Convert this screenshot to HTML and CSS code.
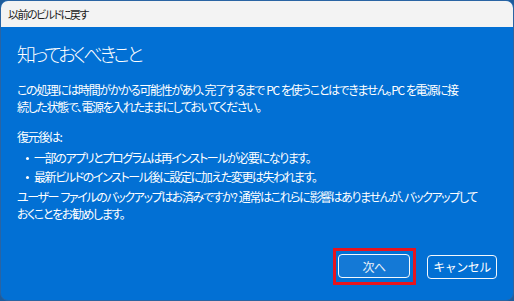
FILE: index.html
```html
<!DOCTYPE html>
<html>

    <head>
        <title>以前のビルドに戻す</title>
        <link rel="stylesheet" href="styles.css">
    </head>

    <body>
        <div class="window">
            <div class="titlebar">以前のビルドに戻す</div>

            <div class="content">
                <h1>知っておくべきこと</h1>
                <p>この処理には時間がかかる可能性があり、完了するまで PC を使うことはできません。PC を電源に接<br>続した状態で、電源を入れたままにしておいてください。</p>
                <p class="label">復元後は:</p>
                <ul>
                    <li>一部のアプリとプログラムは再インストールが必要になります。</li>
                    <li>最新ビルドのインストール後に設定に加えた変更は失われます。</li>
                </ul>
                <p>ユーザー ファイルのバックアップはお済みですか? 通常はこれらに影響はありませんが、バックアップして<br>おくことをお勧めします。</p>
            </div>

            <div class="footer">
                <span class="highlight">
                    <button class="btn primary">次へ</button>
                </span>
                <button class="btn cancel">キャンセル</button>
            </div>
        </div>
    </body>

</html>
```

FILE: styles.css
```css
html {
    background: #1d5c9c;
}

body {
    margin: 0;
    font-family: "Noto Sans CJK JP", sans-serif;
    font-feature-settings: "palt";
}

.window {
    height: 301px;
    box-sizing: border-box;
    display: flex;
    flex-direction: column;
    background: #0270d4;
    border: 1px solid #2a64a3;
    border-radius: 8px;
    overflow: hidden;
    color: #fff;
}

.titlebar {
    height: 24px;
    padding: 2px 0 0 7px;
    line-height: 22px;
    font-size: 11px;
    letter-spacing: -1.5px;
    background: #f3f3f3;
    color: #1b1b1b;
}

.content {
    padding: 13px 16px 0 16px;
    font-size: 12px;
    line-height: 17px;
    letter-spacing: -1.4px;
    word-spacing: 1px;
    white-space: nowrap;
}

h1 {
    margin: 0 0 13px 0;
    font-size: 19px;
    font-weight: 300;
    line-height: 28px;
    letter-spacing: -3px;
}

p {
    margin: 0 0 13px 0;
}

.label {
    margin-bottom: 4px;
}

ul {
    list-style: none;
    margin: 0 0 3px 0;
    padding: 0;
}

li {
    display: flex;
    align-items: flex-start;
    margin-bottom: 2px;
}

li::before {
    content: "";
    flex: none;
    width: 3px;
    height: 3px;
    margin: 8px 5px 0 9px;
    border-radius: 50%;
    background: #fff;
}

.footer {
    margin-top: auto;
    display: flex;
    align-items: center;
    justify-content: flex-end;
    gap: 11px;
    padding: 0 16px 15px 0;
}

.highlight {
    display: flex;
    padding: 3px 3px 4px 2px;
    border: 3px solid #e8141e;
}

.btn {
    height: 24px;
    padding: 0;
    font-family: inherit;
    font-size: 12px;
    letter-spacing: -0.5px;
    color: #fff;
    background: transparent;
    border: 1px solid #f4f8fc;
    border-radius: 4px;
}

.primary {
    width: 72px;
    background: #1479d6;
    color: #e8f0f8;
}

.cancel {
    width: 70px;
}
```
